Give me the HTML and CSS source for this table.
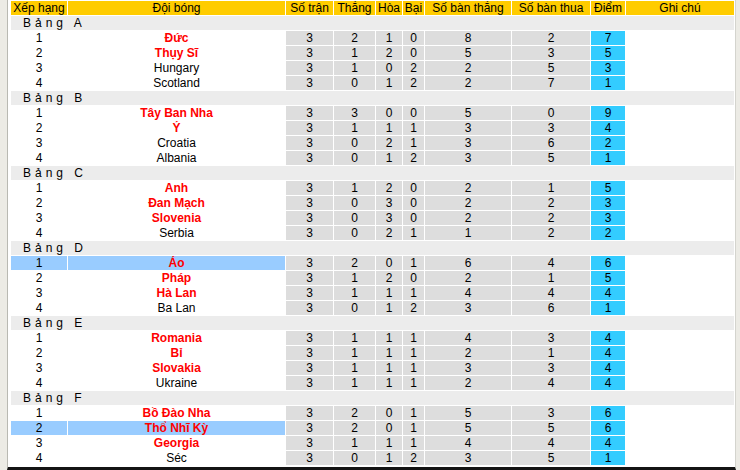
FILE: index.html
```html
<!DOCTYPE html>
<html lang="vi">
<head>
<meta charset="utf-8">
<title>Bảng xếp hạng</title>
<link rel="stylesheet" href="styles.css">
</head>
<body>
<div class="frame">
<table class="standings">
<colgroup>
<col class="c-rank"><col class="c-team"><col class="c-p"><col class="c-w"><col class="c-d"><col class="c-l"><col class="c-gf"><col class="c-ga"><col class="c-pts"><col class="c-note">
</colgroup>
<thead>
<tr class="head"><th>Xếp hạng</th><th>Đội bóng</th><th>Số trận</th><th>Thắng</th><th>Hòa</th><th>Bại</th><th>Số bàn thắng</th><th>Số bàn thua</th><th>Điểm</th><th>Ghi chú</th></tr>
</thead>
<tbody>
<tr class="group"><td colspan="10">Bảng A</td></tr>
<tr><td class="rank">1</td><td class="team q">Đức</td><td class="n">3</td><td class="n">2</td><td class="n">1</td><td class="n">0</td><td class="n">8</td><td class="n">2</td><td class="pts">7</td><td class="note"></td></tr>
<tr><td class="rank">2</td><td class="team q">Thụy Sĩ</td><td class="n">3</td><td class="n">1</td><td class="n">2</td><td class="n">0</td><td class="n">5</td><td class="n">3</td><td class="pts">5</td><td class="note"></td></tr>
<tr><td class="rank">3</td><td class="team">Hungary</td><td class="n">3</td><td class="n">1</td><td class="n">0</td><td class="n">2</td><td class="n">2</td><td class="n">5</td><td class="pts">3</td><td class="note"></td></tr>
<tr><td class="rank">4</td><td class="team">Scotland</td><td class="n">3</td><td class="n">0</td><td class="n">1</td><td class="n">2</td><td class="n">2</td><td class="n">7</td><td class="pts">1</td><td class="note"></td></tr>
<tr class="group"><td colspan="10">Bảng B</td></tr>
<tr><td class="rank">1</td><td class="team q">Tây Ban Nha</td><td class="n">3</td><td class="n">3</td><td class="n">0</td><td class="n">0</td><td class="n">5</td><td class="n">0</td><td class="pts">9</td><td class="note"></td></tr>
<tr><td class="rank">2</td><td class="team q">Ý</td><td class="n">3</td><td class="n">1</td><td class="n">1</td><td class="n">1</td><td class="n">3</td><td class="n">3</td><td class="pts">4</td><td class="note"></td></tr>
<tr><td class="rank">3</td><td class="team">Croatia</td><td class="n">3</td><td class="n">0</td><td class="n">2</td><td class="n">1</td><td class="n">3</td><td class="n">6</td><td class="pts">2</td><td class="note"></td></tr>
<tr><td class="rank">4</td><td class="team">Albania</td><td class="n">3</td><td class="n">0</td><td class="n">1</td><td class="n">2</td><td class="n">3</td><td class="n">5</td><td class="pts">1</td><td class="note"></td></tr>
<tr class="group"><td colspan="10">Bảng C</td></tr>
<tr><td class="rank">1</td><td class="team q">Anh</td><td class="n">3</td><td class="n">1</td><td class="n">2</td><td class="n">0</td><td class="n">2</td><td class="n">1</td><td class="pts">5</td><td class="note"></td></tr>
<tr><td class="rank">2</td><td class="team q">Đan Mạch</td><td class="n">3</td><td class="n">0</td><td class="n">3</td><td class="n">0</td><td class="n">2</td><td class="n">2</td><td class="pts">3</td><td class="note"></td></tr>
<tr><td class="rank">3</td><td class="team q">Slovenia</td><td class="n">3</td><td class="n">0</td><td class="n">3</td><td class="n">0</td><td class="n">2</td><td class="n">2</td><td class="pts">3</td><td class="note"></td></tr>
<tr><td class="rank">4</td><td class="team">Serbia</td><td class="n">3</td><td class="n">0</td><td class="n">2</td><td class="n">1</td><td class="n">1</td><td class="n">2</td><td class="pts">2</td><td class="note"></td></tr>
<tr class="group"><td colspan="10">Bảng D</td></tr>
<tr class="sel"><td class="rank">1</td><td class="team q">Áo</td><td class="n">3</td><td class="n">2</td><td class="n">0</td><td class="n">1</td><td class="n">6</td><td class="n">4</td><td class="pts">6</td><td class="note"></td></tr>
<tr><td class="rank">2</td><td class="team q">Pháp</td><td class="n">3</td><td class="n">1</td><td class="n">2</td><td class="n">0</td><td class="n">2</td><td class="n">1</td><td class="pts">5</td><td class="note"></td></tr>
<tr><td class="rank">3</td><td class="team q">Hà Lan</td><td class="n">3</td><td class="n">1</td><td class="n">1</td><td class="n">1</td><td class="n">4</td><td class="n">4</td><td class="pts">4</td><td class="note"></td></tr>
<tr><td class="rank">4</td><td class="team">Ba Lan</td><td class="n">3</td><td class="n">0</td><td class="n">1</td><td class="n">2</td><td class="n">3</td><td class="n">6</td><td class="pts">1</td><td class="note"></td></tr>
<tr class="group"><td colspan="10">Bảng E</td></tr>
<tr><td class="rank">1</td><td class="team q">Romania</td><td class="n">3</td><td class="n">1</td><td class="n">1</td><td class="n">1</td><td class="n">4</td><td class="n">3</td><td class="pts">4</td><td class="note"></td></tr>
<tr><td class="rank">2</td><td class="team q">Bỉ</td><td class="n">3</td><td class="n">1</td><td class="n">1</td><td class="n">1</td><td class="n">2</td><td class="n">1</td><td class="pts">4</td><td class="note"></td></tr>
<tr><td class="rank">3</td><td class="team q">Slovakia</td><td class="n">3</td><td class="n">1</td><td class="n">1</td><td class="n">1</td><td class="n">3</td><td class="n">3</td><td class="pts">4</td><td class="note"></td></tr>
<tr><td class="rank">4</td><td class="team">Ukraine</td><td class="n">3</td><td class="n">1</td><td class="n">1</td><td class="n">1</td><td class="n">2</td><td class="n">4</td><td class="pts">4</td><td class="note"></td></tr>
<tr class="group"><td colspan="10">Bảng F</td></tr>
<tr><td class="rank">1</td><td class="team q">Bồ Đào Nha</td><td class="n">3</td><td class="n">2</td><td class="n">0</td><td class="n">1</td><td class="n">5</td><td class="n">3</td><td class="pts">6</td><td class="note"></td></tr>
<tr class="sel"><td class="rank">2</td><td class="team q">Thổ Nhĩ Kỳ</td><td class="n">3</td><td class="n">2</td><td class="n">0</td><td class="n">1</td><td class="n">5</td><td class="n">5</td><td class="pts">6</td><td class="note"></td></tr>
<tr><td class="rank">3</td><td class="team q">Georgia</td><td class="n">3</td><td class="n">1</td><td class="n">1</td><td class="n">1</td><td class="n">4</td><td class="n">4</td><td class="pts">4</td><td class="note"></td></tr>
<tr><td class="rank">4</td><td class="team">Séc</td><td class="n">3</td><td class="n">0</td><td class="n">1</td><td class="n">2</td><td class="n">3</td><td class="n">5</td><td class="pts">1</td><td class="note"></td></tr>
</tbody>
</table>
</div>
</body>
</html>
```

FILE: styles.css
```css
html, body {
  margin: 0;
  padding: 0;
}
body {
  background: #ecebe5;
  width: 740px;
  height: 470px;
  overflow: hidden;
  font-family: "Liberation Sans", Arial, sans-serif;
  font-size: 12px;
  color: #000;
}
.frame {
  margin-left: 7px;
  width: 727px;
  height: 467px;
  padding-left: 2px;
  box-sizing: content-box;
  padding-left: 0;
  border-left: 1px solid #b9b9b2;
  border-right: 1px solid #d4d4ce;
  border-bottom: 3px solid #141414;
  background: #fff;
}
.standings {
  margin-left: 2px;
  table-layout: fixed;
  width: 725px;
  border-collapse: separate;
  border-spacing: 1px;
}
.c-rank { width: 56px; }
.c-team { width: 217px; }
.c-p { width: 47px; }
.c-w { width: 41px; }
.c-d { width: 26px; }
.c-l { width: 21px; }
.c-gf { width: 86px; }
.c-ga { width: 78px; }
.c-pts { width: 34px; }
.c-note { width: 108px; }
.standings th,
.standings td {
  padding: 0;
  height: 14px;
  line-height: 14px;
  text-align: center;
  white-space: nowrap;
  overflow: hidden;
}
.head th {
  background: #ffcc00;
  font-weight: normal;
  font-size: 12px;
}
.group td {
  background: #ececec;
  text-align: left;
  padding-left: 12px;
  letter-spacing: 4px;
}
.rank, .team, .note {
  background: #fff;
}
.team.q {
  color: #ff0000;
  font-weight: bold;
}
.n {
  background: #dddddd;
}
.pts {
  background: #33ccff;
}
.sel .rank,
.sel .team {
  background: #99ccff;
}
```
